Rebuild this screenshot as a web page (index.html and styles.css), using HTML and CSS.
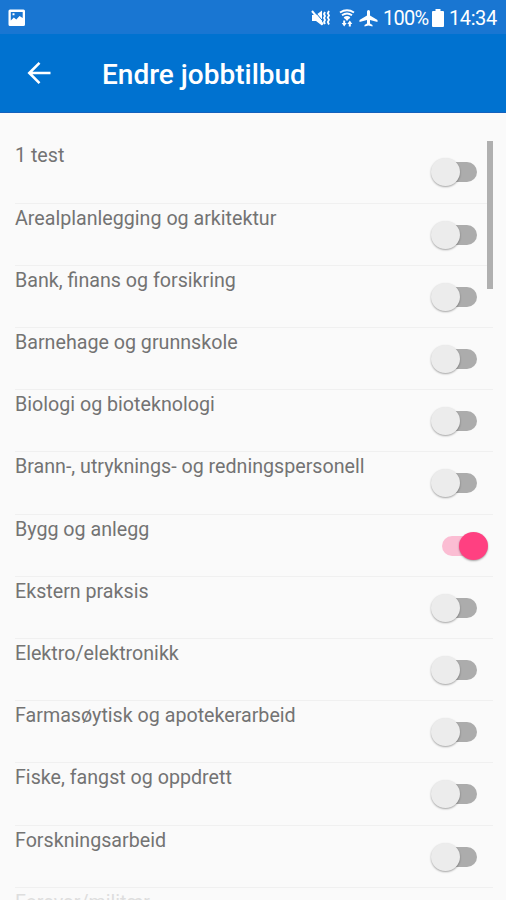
FILE: index.html
```html
<!DOCTYPE html>
<html lang="no">
<head>
<meta charset="utf-8">
<title>Endre jobbtilbud</title>
<link rel="stylesheet" href="styles.css">
</head>
<body>
<div class="screen">
  <header class="status">
    <svg class="picture" width="18" height="18" viewBox="0 0 18 18"><path fill="#fff" fill-rule="evenodd" d="M2 .5h13.5Q17 .5 17 2v13.500q0 1.500-1.500 1.500H2Q.5 17 .5 15.500V2Q.5.500 2 .5ZM2.800 3v8.500l3-3 2.500 2 3.200-3.500 3.200 2V3ZM4.500 4.200h2v2h-2Z"/></svg>
    <div class="indicators">
      <svg class="mute" width="20" height="18" viewBox="0 0 20 18"><path fill="#fff" d="M1 6h4L11 1.500v15L5 12H1Z"/><path stroke="#1976d2" stroke-width="1" d="M3 1.500 13 13.500"/><path stroke="#fff" stroke-width="2" d="M1 2 12 15.500"/><path fill="none" stroke="#fff" stroke-width="1.800" d="m14 3-1 2 1 2-1 2 1 2-1 2 1 2m4-13-1.200 2.200L18 6.400l-1.200 2.200L18 10.800 16.800 13 18 15.500"/></svg>
      <svg class="wifi" width="16" height="18" viewBox="0 0 16 18"><path fill="none" stroke="#fff" stroke-width="1.900" d="M1 3.500Q8-1 15 3.500M3 6.300q5-3.500 10 0M5.200 9q2.800-2 5.600 0"/><path fill="#fff" d="m8 12-2.500-3h5ZM4.200 11.500h2V14h1.500L5.200 17.500 2.700 14h1.500Zm5.600 6V15H8.300l2.500-3.500 2.500 3.500h-1.500v2.500Z"/></svg>
      <svg class="plane" width="19" height="18" viewBox="0 0 19 18"><path fill="#fff" d="M8 2.500Q8 1 9.500 1T11 2.500v4l7.500 4.500v2L11 11v3.500l2.500 1.500v1.500l-4-1-4 1V16L8 14.500V11L.5 13v-2L8 6.500Z"/></svg>
      <span class="percent">100%</span>
      <svg class="battery" width="12" height="18" viewBox="0 0 12 18"><path fill="#fff" d="M3.500 0h5v2H11q1 0 1 1v14q0 1-1 1H1q-1 0-1-1V3q0-1 1-1h2.500Z"/></svg>
      <span class="clock">14:34</span>
    </div>
  </header>
  <div class="toolbar">
    <svg class="back" width="24" height="24" viewBox="0 0 24 24"><path fill="none" stroke="#fff" stroke-width="2.600" d="M12.500 1.800 2.300 12l10.200 10.200M2.500 12H23.500"/></svg>
    <h1>Endre jobbtilbud</h1>
  </div>
  <main class="list">
    <div class="row"><span>1 test</span><i class="switch"></i></div>
    <div class="row"><span>Arealplanlegging og arkitektur</span><i class="switch"></i></div>
    <div class="row"><span>Bank, finans og forsikring</span><i class="switch"></i></div>
    <div class="row"><span>Barnehage og grunnskole</span><i class="switch"></i></div>
    <div class="row"><span>Biologi og bioteknologi</span><i class="switch"></i></div>
    <div class="row"><span>Brann-, utryknings- og redningspersonell</span><i class="switch"></i></div>
    <div class="row"><span>Bygg og anlegg</span><i class="switch on"></i></div>
    <div class="row"><span>Ekstern praksis</span><i class="switch"></i></div>
    <div class="row"><span>Elektro/elektronikk</span><i class="switch"></i></div>
    <div class="row"><span>Farmasøytisk og apotekerarbeid</span><i class="switch"></i></div>
    <div class="row"><span>Fiske, fangst og oppdrett</span><i class="switch"></i></div>
    <div class="row"><span>Forskningsarbeid</span><i class="switch"></i></div>
    <div class="row next"><span>Forsvar/militær</span></div>
    <div class="scrollbar"></div>
  </main>
</div>
</body>
</html>
```
FILE: styles.css
```css
* { box-sizing: border-box; }
body { margin: 0; font-family: Roboto, sans-serif; background: #fafafa; }
.screen { height: 900px; overflow: hidden; display: flex; flex-direction: column; }
.status {
  flex: none; height: 34px; padding: 1px 9px 0 8px; background: #1976d2; color: #fff;
  display: flex; align-items: center; justify-content: space-between;
}
.indicators { display: flex; align-items: center; font-size: 20px; line-height: 36px; }
.mute { margin-right: 8px; }
.wifi { margin-right: 4px; }
.plane { margin-right: 5px; }
.percent { width: 45px; margin-right: 4px; white-space: nowrap; letter-spacing: -.7px; }
.battery { margin-right: 5px; }
.clock { width: 48px; letter-spacing: -.4px; }
.percent, .clock { padding-top: 1px; }
.toolbar {
  flex: none; height: 79px; padding-left: 27px; background: #0072d0; color: #fff;
  border-bottom: 1px solid #1461bd; display: flex; align-items: center;
}
h1 { margin: 4px 0 0 51px; font-size: 28px; line-height: 36px; font-weight: 500; }
.list { flex: none; position: relative; padding: 28.300px 13px 0 15px; }
.row {
  height: 62.230px; border-bottom: 1px solid #f0f0f0; padding-right: 16px;
  display: flex; justify-content: space-between; color: #737373;
  font-size: 19.660px; line-height: 24px;
}
.row span { padding-top: 3px; white-space: nowrap; }
.next { color: #dedede; }
.switch {
  position: relative; width: 36px; height: 20px; margin: 21px 0 0 0;
  border-radius: 10px; background: #acacac;
}
.switch::before {
  content: ""; position: absolute; left: -10px; top: -4px; width: 29px; height: 28px;
  border-radius: 50%; background: #ececec; box-shadow: 0 1px 2px rgba(0, 0, 0, .35);
}
.switch.on { background: #fbbdd3; margin-right: -1px; }
.switch.on::before { left: 17px; background: #ff4081; }
.scrollbar { position: absolute; top: 28px; right: 13px; width: 6px; height: 148px; background: #b0b0b0; }
```
